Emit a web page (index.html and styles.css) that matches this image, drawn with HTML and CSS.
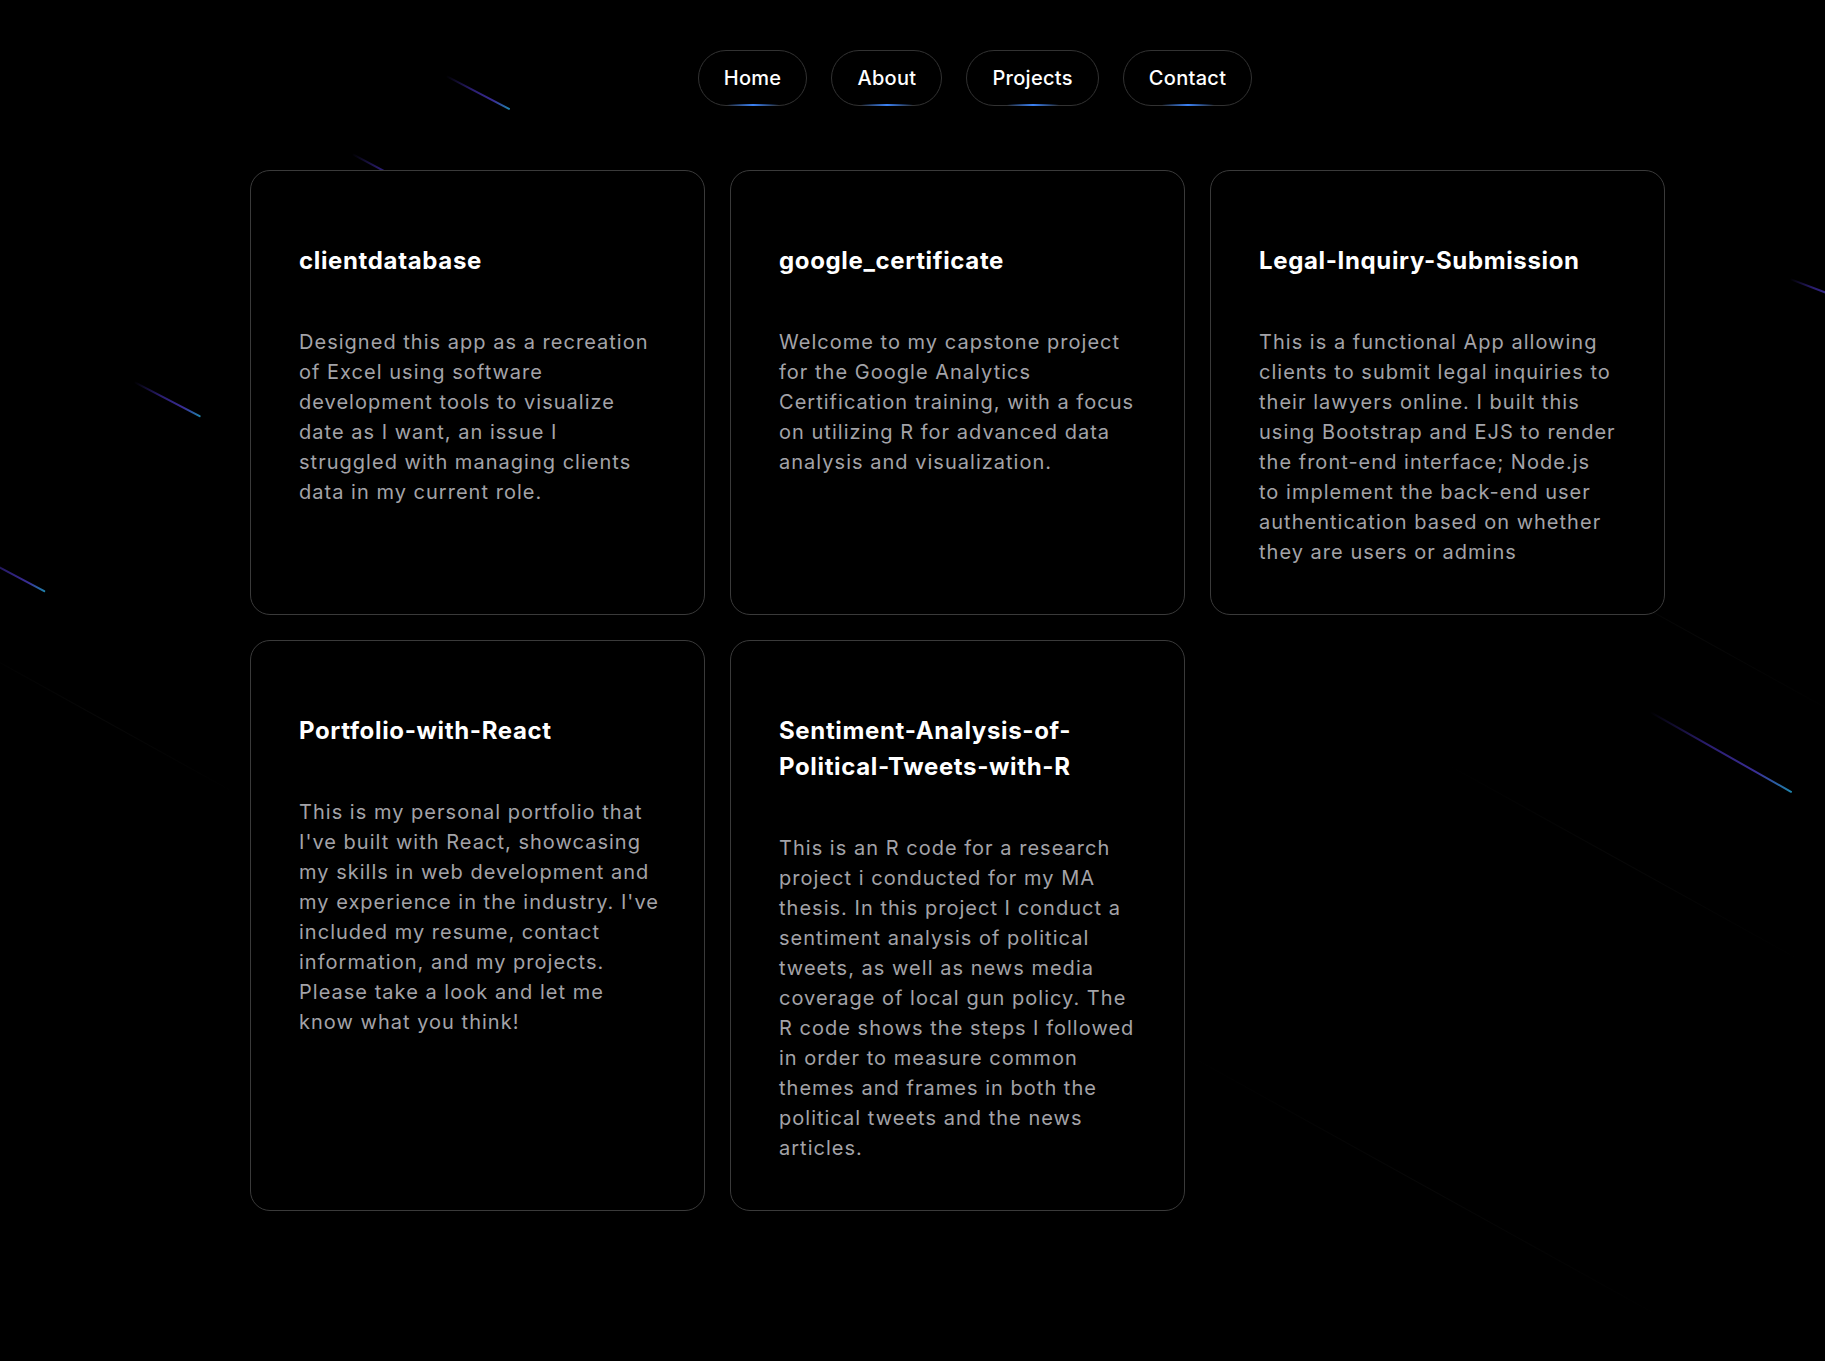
FILE: index.html
```html
<!DOCTYPE html>
<html lang="en">
<head>
<meta charset="utf-8">
<title>Projects</title>
<link rel="stylesheet" href="styles.css">
</head>
<body>
<div class="sky" aria-hidden="true">
  <span class="meteor m1"></span>
  <span class="meteor m2"></span>
  <span class="meteor m3"></span>
  <span class="meteor m4"></span>
  <span class="meteor m5"></span>
  <span class="meteor m6"></span>
  <span class="streak s1"></span>
  <span class="streak s2"></span>
  <span class="streak s3"></span>
  <span class="streak s4"></span>
</div>
<header class="nav">
  <a class="pill" href="#">Home</a>
  <a class="pill" href="#">About</a>
  <a class="pill" href="#">Projects</a>
  <a class="pill" href="#">Contact</a>
</header>
<main class="grid">
  <article class="card">
    <h3 class="card-title">clientdatabase</h3>
    <p class="card-text">Designed this app as a recreation<br>of Excel using software<br>development tools to visualize<br>date as I want, an issue I<br>struggled with managing clients<br>data in my current role.</p>
  </article>
  <article class="card">
    <h3 class="card-title">google_certificate</h3>
    <p class="card-text">Welcome to my capstone project<br>for the Google Analytics<br>Certification training, with a focus<br>on utilizing R for advanced data<br>analysis and visualization.</p>
  </article>
  <article class="card">
    <h3 class="card-title">Legal-Inquiry-Submission</h3>
    <p class="card-text">This is a functional App allowing<br>clients to submit legal inquiries to<br>their lawyers online. I built this<br>using Bootstrap and EJS to render<br>the front-end interface; Node.js<br>to implement the back-end user<br>authentication based on whether<br>they are users or admins</p>
  </article>
  <article class="card">
    <h3 class="card-title">Portfolio-with-React</h3>
    <p class="card-text">This is my personal portfolio that<br>I've built with React, showcasing<br>my skills in web development and<br>my experience in the industry. I've<br>included my resume, contact<br>information, and my projects.<br>Please take a look and let me<br>know what you think!</p>
  </article>
  <article class="card">
    <h3 class="card-title">Sentiment-Analysis-of-<br>Political-Tweets-with-R</h3>
    <p class="card-text">This is an R code for a research<br>project i conducted for my MA<br>thesis. In this project I conduct a<br>sentiment analysis of political<br>tweets, as well as news media<br>coverage of local gun policy. The<br>R code shows the steps I followed<br>in order to measure common<br>themes and frames in both the<br>political tweets and the news<br>articles.</p>
  </article>
</main>
</body>
</html>
```
FILE: styles.css
```css
* { box-sizing: border-box; }

html, body {
  margin: 0;
  padding: 0;
  background: #000;
}

body {
  font-family: "Inter", "Noto Sans", sans-serif;
  color: #fff;
  height: 1361px;
  position: relative;
  overflow: hidden;
}

/* decorative background */
.sky {
  position: absolute;
  inset: 0;
  z-index: 0;
  pointer-events: none;
  overflow: hidden;
}

.meteor {
  position: absolute;
  height: 2px;
  transform-origin: 0 50%;
  background: linear-gradient(90deg, rgba(40, 20, 90, 0) 0%, #2a1d6e 40%, #3a2e96 75%, #1f86ad 100%);
  border-radius: 1px;
}

.m1 { left: 446px; top: 75px; width: 72px; transform: rotate(27.5deg); }
.m2 { left: 352px; top: 153px; width: 80px; transform: rotate(28deg); }
.m3 { left: 134px; top: 381px; width: 75px; transform: rotate(27.5deg); }
.m4 { left: -22px; top: 555px; width: 76px; transform: rotate(28deg); }
.m5 { left: 1650px; top: 711px; width: 163px; transform: rotate(29.5deg); }
.m6 { left: 1790px; top: 278px; width: 60px; transform: rotate(21deg); }

.streak {
  position: absolute;
  height: 1px;
  transform-origin: 0 50%;
  background: linear-gradient(90deg, rgba(255,255,255,0), rgba(255,255,255,0.03), rgba(255,255,255,0));
}

.s1 { left: 1560px; top: 560px; width: 320px; transform: rotate(29deg); }
.s2 { left: 1440px; top: 760px; width: 420px; transform: rotate(29deg); }
.s3 { left: -40px; top: 640px; width: 320px; transform: rotate(29deg); }
.s4 { left: 1180px; top: 1050px; width: 560px; transform: rotate(29deg); }

/* nav */
.nav {
  position: relative;
  z-index: 1;
  display: flex;
  justify-content: center;
  gap: 24px;
  padding: 50px 0 0 125px;
}

.pill {
  position: relative;
  display: block;
  padding: 14px 25px;
  border: 1px solid #323232;
  border-radius: 999px;
  background: #000;
  color: #fff;
  text-decoration: none;
  font-family: "Inter", "Noto Sans", sans-serif;
  font-weight: 500;
  font-size: 20px;
  line-height: 26px;
  letter-spacing: 0.3px;
}

.pill::after {
  content: "";
  position: absolute;
  left: 50%;
  bottom: -1px;
  width: 52px;
  height: 2px;
  margin-left: -26px;
  background: linear-gradient(90deg, rgba(59,130,246,0), #3b82f6 50%, rgba(59,130,246,0));
}

/* grid */
.grid {
  position: relative;
  z-index: 1;
  display: grid;
  grid-template-columns: repeat(3, 455px);
  column-gap: 25px;
  row-gap: 25px;
  padding: 64px 0 0 250px;
  align-items: stretch;
}

.card {
  background: #000;
  border: 1px solid #3a3a3a;
  border-radius: 20px;
  padding: 72px 30px 47px 48px;
}

.card-title {
  margin: 0 0 48px;
  font-size: 24px;
  line-height: 36px;
  font-weight: 700;
  color: #fff;
  letter-spacing: 0.65px;
}

.card-text {
  margin: 0;
  font-size: 20px;
  line-height: 30px;
  font-weight: 400;
  color: #a3a3a8;
  letter-spacing: 1.02px;
  white-space: nowrap;
}
```
